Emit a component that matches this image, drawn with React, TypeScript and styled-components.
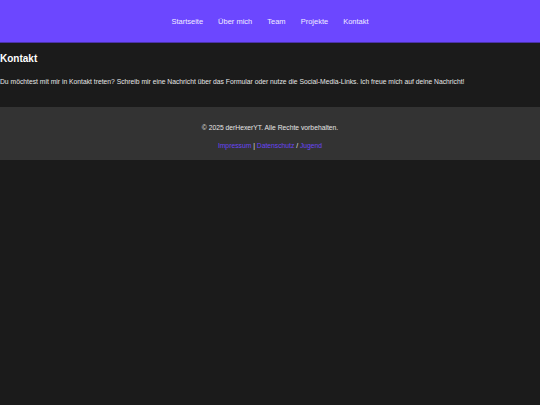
import styled, { createGlobalStyle } from 'styled-components';

const GlobalStyle = createGlobalStyle`
  html, body {
    margin: 0;
    padding: 0;
    background-color: #1b1b1b;
    color: #eeeeee;
    font-family: 'Liberation Sans', Arial, sans-serif;
  }
`;

const Header = styled.header`
  background-color: #6c47ff;
  height: 42px;
  display: flex;
  justify-content: center;
  align-items: center;
  border-bottom: 1px solid #4b33a8;
`;

const Nav = styled.nav`
  display: flex;
  gap: 15px;
`;

const NavLink = styled.a`
  color: #f1ecff;
  font-size: 7.5px;
  text-decoration: none;
`;

const Main = styled.main`
  padding: 10px 0 22px;
`;

const Title = styled.h1`
  font-size: 10px;
  font-weight: bold;
  margin: 0 0 14px;
  color: #ffffff;
`;

const Text = styled.p`
  font-size: 6.75px;
  margin: 0;
  color: #e6e6e6;
`;

const Footer = styled.footer`
  background-color: #333333;
  padding: 17px 0 11px;
  text-align: center;
  font-size: 6.75px;
  color: #e6e6e6;
`;

const FooterLine = styled.p`
  margin: 0 0 11px;
  &:last-child {
    margin-bottom: 0;
  }
`;

const FooterLink = styled.a`
  color: #6a45f5;
  text-decoration: none;
`;

const links = ['Startseite', 'Über mich', 'Team', 'Projekte', 'Kontakt'];

const App = () => {
  return (
    <>
      <GlobalStyle />
      <Header>
        <Nav>
          {links.map((l) => (
            <NavLink key={l} href="#">
              {l}
            </NavLink>
          ))}
        </Nav>
      </Header>
      <Main>
        <Title>Kontakt</Title>
        <Text>
          Du möchtest mit mir in Kontakt treten? Schreib mir eine Nachricht über das Formular oder
          nutze die Social-Media-Links. Ich freue mich auf deine Nachricht!
        </Text>
      </Main>
      <Footer>
        <FooterLine>© 2025 derHexerYT. Alle Rechte vorbehalten.</FooterLine>
        <FooterLine>
          <FooterLink href="#">Impressum</FooterLink> | <FooterLink href="#">Datenschutz</FooterLink> /{' '}
          <FooterLink href="#">Jugend</FooterLink>
        </FooterLine>
      </Footer>
    </>
  );
};

export default App;
